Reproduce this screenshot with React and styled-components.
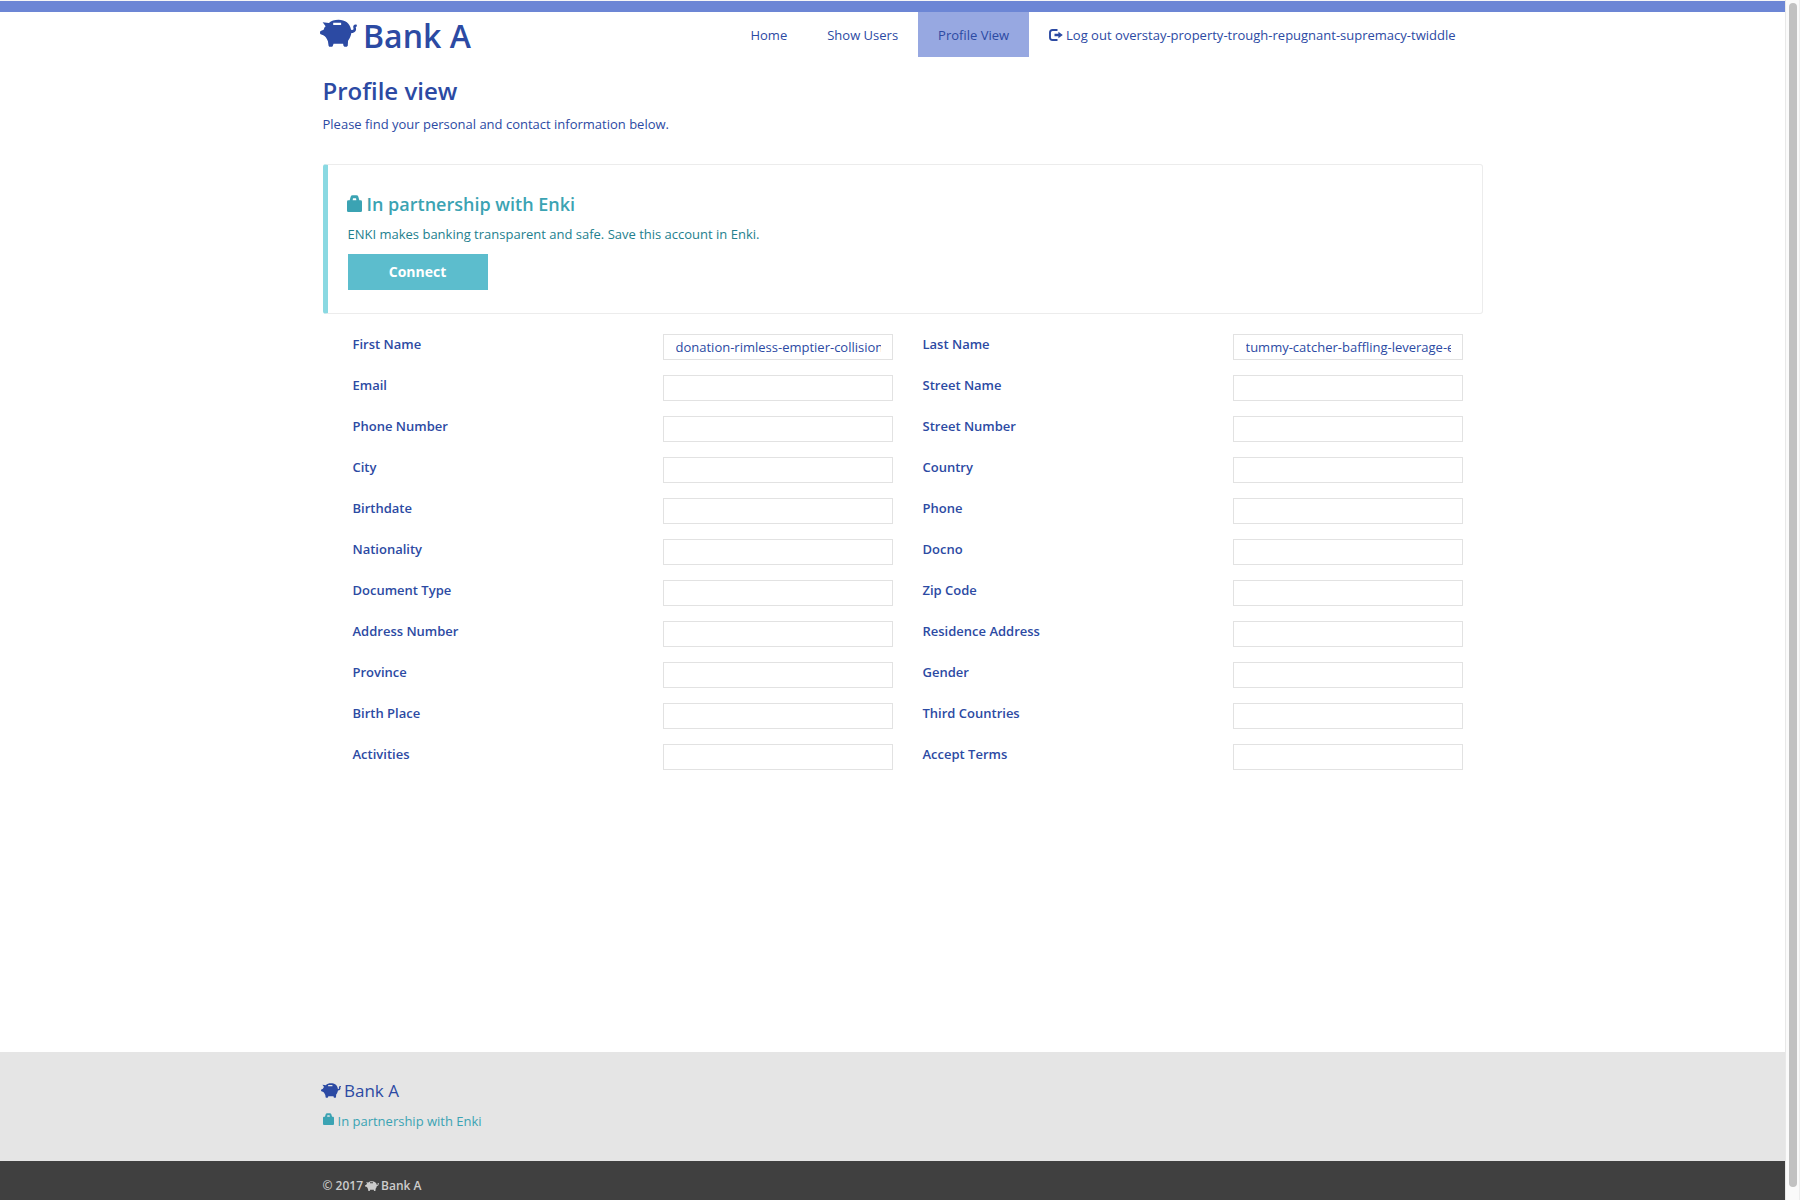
import React from "react";
import styled, { createGlobalStyle } from "styled-components";

const GlobalStyle = createGlobalStyle`
  *, *::before, *::after { box-sizing: border-box; }
  html, body { margin: 0; padding: 0; height: 1200px; overflow: hidden; }
  body {
    font-family: "Open Sans", "Noto Sans", sans-serif;
    font-size: 13px;
    line-height: 20px;
    color: #2c4aa3;
    background: #fff;
  }
  h1, h2, p { margin: 0; }
`;

const Screen = styled.div`
  display: flex;
  width: 1800px;
  height: 1200px;
`;

const Page = styled.div`
  display: flex;
  flex-direction: column;
  width: 1785px;
  height: 1200px;
`;

const Container = styled.div`
  width: 1160px;
  margin-left: 322.5px;
`;

const TopBar = styled.div`
  height: 12px;
  border-top: 1px solid #f6f6f6;
  background: #6c86d5;
  flex: none;
`;

const Header = styled(Container)`
  display: flex;
  justify-content: space-between;
  height: 57px;
`;

const Brand = styled.a`
  display: flex;
  align-items: flex-start;
  gap: 6px;
  margin-left: -2.5px;
  padding-top: 4px;
  font-size: 32px;
  font-weight: 600;
  line-height: 40px;
  white-space: nowrap;

  svg { margin-top: 3px; }
`;

const Nav = styled.nav`
  display: flex;
  height: 45px;
  margin-right: 7px;
`;

const NavItem = styled.a`
  display: flex;
  align-items: center;
  gap: 3px;
  padding: 0 20px;
  white-space: nowrap;
  background: ${(p) => (p.$active ? "#97a8e1" : "transparent")};
`;

const Main = styled(Container)`
  flex: 1;
`;

const Title = styled.h1`
  padding-top: 6px;
  font-size: 24px;
  font-weight: 600;
  line-height: 32px;
`;

const Intro = styled.p`
  margin-top: 7px;
`;

const Panel = styled.section`
  height: 150px;
  margin-top: 30px;
  padding: 28px 20px 0;
  border: 1px solid #ececec;
  border-left: 5px solid #8ad9e2;
  border-radius: 3px;
`;

const PanelTitle = styled.h2`
  display: flex;
  align-items: flex-start;
  gap: 5px;
  margin-left: -1px;
  font-size: 18px;
  font-weight: 600;
  line-height: 22px;
  color: #3ba3b3;

  svg { margin-top: 2px; }
`;

const PanelText = styled.p`
  margin-top: 9px;
  color: #23808e;
`;

const ConnectButton = styled.button`
  display: block;
  width: 140px;
  height: 36px;
  margin-top: 10px;
  padding: 0;
  border: 0;
  background: #5cbdcd;
  color: #fff;
  font: 700 14px/36px "Open Sans", "Noto Sans", sans-serif;
`;

const Fields = styled.div`
  display: grid;
  grid-template-columns: 540px 540px;
  column-gap: 30px;
  row-gap: 15px;
  margin: 20px 0 0 30px;
`;

const Field = styled.label`
  display: flex;
  justify-content: space-between;
  height: 26px;
  font-weight: 600;
`;

const Input = styled.input`
  width: 230px;
  height: 26px;
  padding: 0 11px 0 12px;
  border: 1px solid #e2e2e2;
  outline: 0;
  background: #fff;
  color: inherit;
  font: 400 13px/24px "Open Sans", "Noto Sans", sans-serif;
`;

const Footer = styled.footer`
  flex: none;
  height: 109px;
  background: #e5e5e5;
`;

const FooterBrand = styled.div`
  display: flex;
  align-items: flex-start;
  gap: 3px;
  margin-left: -1.5px;
  padding-top: 27px;
  font-size: 17px;
  line-height: 24px;

  svg { margin-top: 4px; }
`;

const FooterPartner = styled.div`
  display: flex;
  align-items: flex-start;
  gap: 4px;
  margin-top: 8px;
  color: #3ba3b3;

  svg { margin-top: 2px; }
`;

const Copyright = styled.div`
  flex: none;
  height: 39px;
  background: #404040;
`;

const CopyrightLine = styled(Container)`
  display: flex;
  align-items: center;
  gap: 2px;
  padding-top: 15px;
  font-size: 12px;
  font-weight: 600;
  line-height: 20px;
  color: #ccc;
`;

const ScrollTrack = styled.div`
  width: 15px;
  height: 1200px;
  padding: 3px 3px 0;
  border-left: 1px solid #e8e8e8;
  border-right: 1px solid #ededed;
  background: #fafafa;
`;

const ScrollThumb = styled.div`
  width: 8px;
  height: 1184px;
  border-radius: 4px;
  background: #c1c1c1;
`;

const PiggyIcon = ({ width, height }) => (
  <svg width={width} height={height} viewBox="0 0 112 84" preserveAspectRatio="none" fill="currentColor">
    <path
      fillRule="evenodd"
      d="M8 10 L27 12 C34 5 44 2 56 2 C76 2 91 12 94 32 L97 33 C102 32 102 30 101 27 C99 19 104 15 111 17 L112 22 L108 24 C112 35 106 42 95 42 C93 52 90 59 85 65 L84 80 L81 83 L74 83 L71 80 L70 74 L41 74 L39 80 L37 83 L28 83 L26 80 L24 67 C20 59 17 52 10 49 L2 46 Q0 45 0 41 Q0 37 2 36 L11 32 Q13 25 17 22 Z M40 11 V18 H64 V11 Z"
    />
  </svg>
);

const LockIcon = ({ width, height }) => (
  <svg width={width} height={height} viewBox="0 0 45 51" preserveAspectRatio="none" fill="currentColor">
    <path
      fillRule="evenodd"
      d="M4 16 H8 L11 5 Q12 1 17 1 H28 Q33 1 34 5 L37 16 H41 Q45 16 45 20 V47 Q45 51 41 51 H4 Q0 51 0 47 V20 Q0 16 4 16 Z M18 10 L17 16 H28 L27 10 Z"
    />
  </svg>
);

const LogoutIcon = () => (
  <svg width="14" height="12" viewBox="0 0 14 12" fill="none">
    <path d="M8.5 1 H3.5 Q1 1 1 3.5 V8.5 Q1 11 3.5 11 H8.5" stroke="currentColor" strokeWidth="1.9" />
    <path d="M5.5 4.7 H9.4 V2.8 L13.8 6 L9.4 9.2 V7.3 H5.5 Z" fill="currentColor" />
  </svg>
);

const FIELDS = [
  ["First Name", "donation-rimless-emptier-collision"],
  ["Last Name", "tummy-catcher-baffling-leverage-excess"],
  ["Email"],
  ["Street Name"],
  ["Phone Number"],
  ["Street Number"],
  ["City"],
  ["Country"],
  ["Birthdate"],
  ["Phone"],
  ["Nationality"],
  ["Docno"],
  ["Document Type"],
  ["Zip Code"],
  ["Address Number"],
  ["Residence Address"],
  ["Province"],
  ["Gender"],
  ["Birth Place"],
  ["Third Countries"],
  ["Activities"],
  ["Accept Terms"],
];

export default function App() {
  return (
    <Screen>
      <GlobalStyle />
      <Page>
        <TopBar />
        <Header as="header">
          <Brand>
            <PiggyIcon width={37} height={28} />
            Bank A
          </Brand>
          <Nav>
            <NavItem>Home</NavItem>
            <NavItem>Show Users</NavItem>
            <NavItem $active>Profile View</NavItem>
            <NavItem>
              <LogoutIcon />
              Log out overstay-property-trough-repugnant-supremacy-twiddle
            </NavItem>
          </Nav>
        </Header>
        <Main as="main">
          <Title>Profile view</Title>
          <Intro>Please find your personal and contact information below.</Intro>
          <Panel>
            <PanelTitle>
              <LockIcon width={15} height={17} />
              In partnership with Enki
            </PanelTitle>
            <PanelText>ENKI makes banking transparent and safe. Save this account in Enki.</PanelText>
            <ConnectButton>Connect</ConnectButton>
          </Panel>
          <Fields>
            {FIELDS.map(([label, value = ""]) => (
              <Field key={label}>
                {label}
                <Input defaultValue={value} />
              </Field>
            ))}
          </Fields>
        </Main>
        <Footer>
          <Container>
            <FooterBrand>
              <PiggyIcon width={20} height={15} />
              Bank A
            </FooterBrand>
            <FooterPartner>
              <LockIcon width={11} height={12} />
              In partnership with Enki
            </FooterPartner>
          </Container>
        </Footer>
        <Copyright>
          <CopyrightLine>
            © 2017
            <PiggyIcon width={14} height={10} />
            Bank A
          </CopyrightLine>
        </Copyright>
      </Page>
      <ScrollTrack>
        <ScrollThumb />
      </ScrollTrack>
    </Screen>
  );
}
